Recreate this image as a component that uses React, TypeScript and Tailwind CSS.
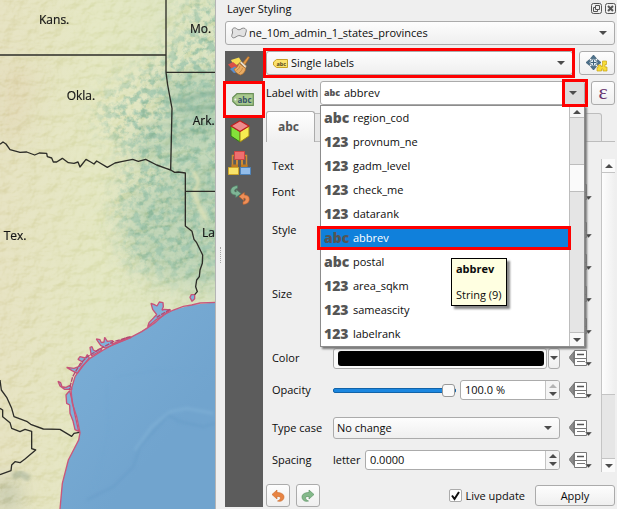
import { useState, type ReactNode } from "react";

const fields: [string, string][] = [
  ["abc", "region_cod"],
  ["123", "provnum_ne"],
  ["123", "gadm_level"],
  ["123", "check_me"],
  ["123", "datarank"],
  ["abc", "abbrev"],
  ["abc", "postal"],
  ["123", "area_sqkm"],
  ["123", "sameascity"],
  ["123", "labelrank"],
];

const frame = "rounded-[3px] border border-[#ababab]";
const raised = "bg-linear-to-b from-[#fdfdfd] to-[#efefef]";

function Arrow({ up = false, faded = false }: { up?: boolean; faded?: boolean }) {
  return (
    <svg width="8" height="4" viewBox="0 0 8 4" className="pointer-events-none shrink-0">
      <path d={up ? "M0 4L4 0l4 4z" : "M0 0h8L4 4z"} fill={faded ? "#b4b4b4" : "#4c4c4c"} />
    </svg>
  );
}

function Combo({ label, value, icon, className = "" }: { label: string; value: string; icon?: ReactNode; className?: string }) {
  return (
    <div className={`flex min-w-0 items-center ${frame} ${raised} ${className}`}>
      {icon}
      <select aria-label={label} className="h-full min-w-0 flex-1 appearance-none bg-transparent outline-none">
        <option>{value}</option>
      </select>
      <span className="px-[7px]">
        <Arrow />
      </span>
    </div>
  );
}

function Spin({ id, label, value, topFaded = false, className = "" }: { id: string; label: string; value: string; topFaded?: boolean; className?: string }) {
  const [text, setText] = useState(value);
  return (
    <div className={`flex h-5 min-w-0 overflow-hidden bg-white ${frame} ${className}`}>
      <input id={id} aria-label={label} value={text} onChange={(e) => setText(e.target.value)} className="min-w-0 flex-1 bg-transparent pl-1 outline-none" />
      <span className="flex w-[14px] flex-col items-center justify-center gap-1 border-l border-[#c4c4c4] bg-[#f4f4f4]">
        <Arrow up faded={topFaded} />
        <Arrow />
      </span>
    </div>
  );
}

function DataDefined() {
  return (
    <button aria-label="Data defined override" className="ml-[9px] mr-[9px] shrink-0">
      <svg width="23" height="17" viewBox="0 0 23 17" className="block">
        <path d="M0 7.500L5 1.500v12z" fill="#8b8b8b" stroke="#666" strokeWidth=".7" />
        <path d="M5.500.5h12v15h-12z" fill="#fff" stroke="#777" />
        <path d="M5.500 8.500h12" stroke="#777" />
        <path d="M8 4.500h7" stroke="#555" strokeWidth="1.500" />
        <path d="M8 11.500h8" stroke="#777" />
        <path d="M16 12h7l-3.500 4z" fill="#444" stroke="#efefef" strokeWidth=".4" />
      </svg>
    </button>
  );
}

function Row({ label, htmlFor, children, override = true }: { label?: string; htmlFor?: string; children?: ReactNode; override?: boolean }) {
  return (
    <div className={`flex items-center ${override ? "h-8" : "h-5"}`}>
      <label htmlFor={htmlFor} className="w-[61px] shrink-0">
        {label}
      </label>
      <div className="flex min-w-0 flex-1 items-center">{children}</div>
      {override && <DataDefined />}
    </div>
  );
}

function TagIcon({ green = false }: { green?: boolean }) {
  return green ? (
    <svg width="22" height="13" viewBox="0 0 22 13">
      <path d="M5 .7h16.300v11.600H5L.8 8.500v-4z" fill="#a9c98e" stroke="#6a8f58" strokeWidth="1.200" />
      <circle cx="3.400" cy="6.500" r="1" fill="#eee" />
      <text x="5.500" y="9.500" fontSize="8" fontWeight="bold" fill="#35546a" fontFamily="Open Sans, sans-serif">abc</text>
    </svg>
  ) : (
    <svg width="15" height="9" viewBox="0 0 15 9" className="mr-[3px] ml-[6px] shrink-0">
      <path d="M3.500.5h11v8h-11l-3-2.500V3z" fill="#fbe26c" stroke="#c6a127" />
      <text x="3.500" y="6.800" fontSize="5.500" fontWeight="bold" fill="#544720" fontFamily="Open Sans, sans-serif">abc</text>
    </svg>
  );
}

function BrushIcon() {
  return (
    <svg width="23" height="20" viewBox="0 0 23 20" strokeLinejoin="round">
      <path d="M3 4l8-2.500 3 5L6 10z" fill="#f6dc55" />
      <path d="M0 8.500L5 6l5 4-5 4z" fill="#d95046" />
      <path d="M2 13l5-2.500 5 5-6 1.500z" fill="#5b8fd0" />
      <path d="M14 8l6-7.500 1.500 1L16 10z" fill="#e39a4a" stroke="#b0681f" strokeWidth=".6" />
      <path d="M11.500 6.500l2-1 5 4.500-1 2.500z" fill="#e6dccb" stroke="#94703f" strokeWidth=".6" />
      <path d="M11 7l6.500 5.500c0 3-2 5.500-5 6.500-3-1-5.500-3-6.500-6 3-1 4-3 5-6z" fill="#e9ac63" stroke="#b3702b" strokeWidth=".7" />
      <path d="M12 10c-.5 2-1.500 3-3.500 4.500M14.500 12c-.5 2-1.500 3.500-3.500 5" fill="none" stroke="#b97834" strokeWidth=".7" />
    </svg>
  );
}

function CubeIcon() {
  return (
    <svg width="20" height="23" viewBox="0 0 20 23" strokeLinejoin="round">
      <path d="M1 6l9 5.500V22L1 16z" fill="#84e03a" stroke="#2f7a14" />
      <path d="M19 6l-9 5.500V22l9-6z" fill="#f6ec50" stroke="#9c8414" />
      <path d="M10 .8L19 6l-9 5.500L1 6z" fill="#f08c8c" stroke="#c01f1f" strokeWidth="1.200" />
    </svg>
  );
}

function DiagramIcon() {
  return (
    <svg width="23" height="24" viewBox="0 0 23 24">
      <path d="M6.500 4.500h-2v11M16.500 4.500h2v11" fill="none" stroke="#d08c33" strokeWidth="1.500" />
      <path d="M9 8v7M14 8v7" stroke="#d08c33" strokeWidth="2" />
      <path d="M3.500 13.500h6.500v3H3.500zM13 13.500h6.500v3H13z" fill="#c07a22" />
      <path d="M6.500.5h10v8h-10z" fill="#ee6f6f" stroke="#cf4444" />
      <path d="M.5 16.500h10v7H.5z" fill="#f9e36a" stroke="#cda52b" />
      <path d="M12.500 16.500h10v7h-10z" fill="#93bdea" stroke="#4f84ba" />
    </svg>
  );
}

function HistoryIcon() {
  return (
    <svg width="20" height="20" viewBox="0 0 20 20" strokeLinejoin="round">
      <path d="M7.500.7C3.500.7.700 3 .7 6c0 2.500 2 4 5 4v2.500L11 8.500 6.200 4.700V7C3.800 7 3.800 4 7.500 3.200z" fill="#7fb596" stroke="#4f8467" strokeWidth=".6" />
      <path d="M13 19.300c4 0 6.300-2 6.300-5s-2-4.300-5-4.300V7.500L9 11.500l4.800 4V13c2.400 0 2.400 3-.8 3.800z" fill="#ee8f58" stroke="#c4632c" strokeWidth=".6" />
    </svg>
  );
}

function Undo({ redo = false }: { redo?: boolean }) {
  return (
    <svg width="14" height="14" viewBox="0 0 14 14" strokeLinejoin="round" className={redo ? "-scale-x-100" : ""}>
      <path d="M6 1L1 5.500 6 10V7.500c3-.3 4 .7 3.300 2.200-.4 1-1.300 1.600-2.800 2.300 3.500 1.200 6.500-1 6.500-4C13 5 10 3.500 6 3.500z" fill={redo ? "#84b98a" : "#e88443"} stroke={redo ? "#548d5c" : "#c96a2a"} strokeWidth=".6" />
    </svg>
  );
}

function PinIcon() {
  return (
    <svg width="22" height="17" viewBox="0 0 22 17">
      <path d="M7.500 0l3 3.500h-6zM7.500 15l3-3.500h-6zM0 7.500l3.500-3v6zM15 7.500l-3.500-3v6z" fill="#4c718b" stroke="#2c4e67" strokeWidth=".6" />
      <path d="M7.500 3l4.500 4.500-4.500 4.500L3 7.500z" fill="#dfe9ef" stroke="#3c617b" />
      <path d="M7.500 4.500v6M4.500 7.500h6" stroke="#3c617b" />
      <path d="M12 10h3v1.500h1.500V6h4v3.500H19V12h2v4h-4v-2h-1.500v2H11v-3.500h1z" fill="#f6dc3a" stroke="#c9a414" strokeWidth=".7" />
    </svg>
  );
}

const bays = [
  "M443 980L447 968 462 952 470 944 458 928 453 910 463 914 471 918 478 906 489 908 490 920 486 930 494 928 512 930 500 938 488 948 470 958z",
  "M289 1017L300 1019 304 1028 312 1026 314 1012 322 1024 338 1022 336 1032 356 1024 382 1012 394 1012 350 1030 316 1044 302 1036 292 1022z",
  "M270 1042L276 1040 280 1050 288 1054 300 1046 306 1050 274 1068z",
  "M200 1102L222 1105 240 1098 248 1086 234 1078 240 1070 256 1074 262 1064 268 1074 250 1096 232 1120 216 1112z",
  "M174 1144L182 1148 186 1160 198 1162 210 1156 216 1168 194 1168 180 1158z",
  "M209 1172L198 1185 200 1210 209 1215 210 1240 219 1263 225 1289 236 1294 224 1240 216 1200z",
  "M570 892L574 884 584 884 584 896 576 904z",
];

function MapCanvas() {
  const land = "M0 0H648V907L575 915 520 930 490 945 440 985 392 1012 345 1030 310 1050 270 1075 245 1100 225 1130 213 1170 217 1210 230 1250 240 1298 236 1320 205 1380 187 1450 180 1527H0z";
  const coast = "M648 907L600 909 575 915 550 919 520 930 490 945 465 968 440 985 425 995 392 1012 345 1030 310 1050 270 1075 245 1100 225 1130 213 1170 217 1210 230 1250 240 1298 236 1320 205 1380 187 1450 180 1527";
  return (
    <svg viewBox="0 0 645 1527" preserveAspectRatio="xMinYMin slice" className="absolute inset-0 size-full" role="img" aria-label="Map of the southern states">
      <defs>
        <linearGradient id="land" x1="0" y1="0" x2="1" y2="0">
          <stop offset="0" stopColor="#e5e1bf" />
          <stop offset=".45" stopColor="#e3e6c0" />
          <stop offset="1" stopColor="#dae3c0" />
        </linearGradient>
        <linearGradient id="sea" x1="0" y1="0" x2=".5" y2="1">
          <stop offset="0" stopColor="#80b3db" />
          <stop offset=".6" stopColor="#7cafd7" />
          <stop offset="1" stopColor="#71a4ce" />
        </linearGradient>
        <filter id="soft" x="-50%" y="-50%" width="200%" height="200%">
          <feGaussianBlur stdDeviation="34" />
        </filter>
        <filter id="haze" x="-50%" y="-50%" width="200%" height="200%">
          <feGaussianBlur stdDeviation="5" />
        </filter>
        <filter id="forest" x="-20%" y="-10%" width="140%" height="120%" colorInterpolationFilters="sRGB">
          <feTurbulence type="fractalNoise" baseFrequency=".045" numOctaves="4" seed="8" />
          <feColorMatrix values="0 0 0 0 .6  0 0 0 0 .76  0 0 0 0 .66  4 0 0 0 -1.700" result="n" />
          <feGaussianBlur in="SourceAlpha" stdDeviation="40" result="m" />
          <feComposite in="n" in2="m" operator="in" />
        </filter>
        <filter id="relief" x="0" y="0" width="100%" height="100%" colorInterpolationFilters="sRGB">
          <feTurbulence type="fractalNoise" baseFrequency=".02 .028" numOctaves="4" seed="3" />
          <feColorMatrix values="0 0 0 0 0  0 0 0 0 0  0 0 0 0 0  1 0 0 0 0" />
          <feDiffuseLighting surfaceScale="16" diffuseConstant=".7" lightingColor="#fff">
            <feDistantLight azimuth="225" elevation="50" />
          </feDiffuseLighting>
        </filter>
        <clipPath id="landclip">
          <path d={land} />
        </clipPath>
      </defs>
      <rect width="648" height="1527" fill="url(#sea)" />
      <g fill="none" filter="url(#haze)">
        <path d="M645 1270L610 1280 540 1265 505 1245 465 1290 420 1340 400 1400 340 1460 260 1500" stroke="#5f96c2" strokeWidth="8" opacity=".35" />
        <path d="M640 1240L560 1225 510 1235 455 1280 405 1350" stroke="#94c2e2" strokeWidth="8" opacity=".3" />
        <path d="M320 1150L325 1290 300 1400 280 1470M350 1130L470 1110 640 1120" stroke="#6ea4ce" strokeWidth="6" opacity=".35" />
      </g>
      <g clipPath="url(#landclip)">
        <rect width="648" height="1527" fill="url(#land)" />
        <g filter="url(#soft)">
          <path d="M480 240L680 210V420L560 400 490 320z" fill="#97bda4" opacity=".55" />
          <path d="M400 400L680 300V600L520 540 400 480z" fill="#a8c9ae" opacity=".5" />
          <path d="M390 560L680 500V860L530 850 420 800 370 700z" fill="#a2c5aa" opacity=".55" />
          <path d="M0 180L120 220 60 420 0 420z" fill="#dfd2ae" opacity=".5" />
          <path d="M0 1440L50 1460 40 1527H0z" fill="#7e9284" opacity=".6" />
        </g>
        <g filter="url(#forest)" opacity=".85">
          <path d="M720 0V840L530 830 400 800 350 600 400 480 300 360 320 290 450 200 540 120 550 0z" />
        </g>
        <rect width="648" height="1527" filter="url(#relief)" className="mix-blend-soft-light" opacity=".45" />
        <path d="M580 512L596 545 582 580 600 625 622 665" fill="none" stroke="#dde1b8" strokeWidth="12" filter="url(#haze)" opacity=".9" />
        <path d="M510 305L560 300 600 285 660 275M530 330L600 325 655 318" fill="none" stroke="#7aa992" strokeWidth="12" opacity=".5" filter="url(#haze)" />
        <path d="M410 385L470 370 520 380M400 420L460 405 520 410 580 395M410 445L500 440 560 425" fill="none" stroke="#8db5a0" strokeWidth="6" opacity=".5" filter="url(#haze)" />
        <path d="M38 1430L60 1420 88 1436" fill="none" stroke="#718b7d" strokeWidth="20" opacity=".3" filter="url(#haze)" />
      </g>
      <g fill="#7fb2da" stroke="#c75278" strokeWidth="4" strokeLinejoin="bevel">
        {bays.map((d) => (
          <path key={d} d={d} />
        ))}
      </g>
      <path d={coast} fill="none" stroke="#c9577b" strokeWidth="4" />
      <path d="M510 928L470 952M392 1010L340 1025 296 1049 262 1070 240 1092 218 1130 208 1168" fill="none" stroke="#b04a74" strokeWidth="4" strokeDasharray="14 3" />
      <g fill="none" stroke="#2d2d28" strokeWidth="4" strokeLinejoin="round">
        <path d="M0 165H498M498 0V217H648M498 217L503 255 516 325 512 510" />
        <path d="M0 433L9 426 18 432 30 449 60 457 80 456 104 465 118 459 140 460 142 470 155 474 160 486 170 486 187 475 205 488 222 490 234 486 240 501 258 478 272 486 282 492 290 483 322 502 345 489 368 484 398 478 415 484 437 478 470 495 498 505 512 510 524 517 535 516 556 519V678L576 694 582 718 590 728 608 765 607 790 600 810 598 830 590 840 587 860 592 875 584 884M556 574H648" />
        <path d="M0 1140L4 1170 20 1192 35 1225 42 1250 80 1264 92 1273 130 1287 180 1288 215 1309 222 1300 238 1297M0 1225L8 1230 8 1250 30 1268 35 1285 60 1295 75 1288 95 1294V1346L107 1350 75 1377 60 1388 45 1385 35 1395 33 1412 0 1424" />
      </g>
      <g fontFamily="Open Sans, sans-serif" fontSize="36" fill="#151515" stroke="#151515" strokeWidth=".6">
        <text x="117" y="73">Kans.</text>
        <text x="570" y="99">Mo.</text>
        <text x="200" y="300">Okla.</text>
        <text x="578" y="375">Ark.</text>
        <text x="11" y="719">Tex.</text>
        <text x="606" y="712">La</text>
      </g>
    </svg>
  );
}

function Highlight({ className }: { className: string }) {
  return <span className={`pointer-events-none absolute border-[3px] border-[#fe0000] ${className}`} />;
}

function FieldList() {
  const [selected, setSelected] = useState("abbrev");
  return (
    <div className="absolute inset-x-0 top-full z-20 flex border border-[#8c8c8c] bg-white shadow-[2px_2px_2px_#777]">
      <ul role="listbox" aria-label="Fields" className="min-w-0 flex-1">
        {fields.map(([kind, name]) => (
          <li
            key={name}
            role="option"
            aria-selected={name === selected}
            onClick={() => setSelected(name)}
            className={`relative flex h-6 items-center pl-[3px] ${name === selected ? "bg-[#1080db] text-white" : ""}`}
          >
            <span className="w-[29px] text-[14px] font-extrabold text-[#555]">{kind}</span>
            {name}
            {name === selected && <Highlight className="-left-1 -right-[2px] inset-y-0" />}
          </li>
        ))}
      </ul>
      <div className="flex w-[15px] shrink-0 flex-col border-l border-[#bdbdbd] bg-[#e5e5e5]">
        <span className="flex h-3 items-center justify-center border-b border-[#bdbdbd] bg-[#f7f7f7]">
          <Arrow up />
        </span>
        <span className="mt-[46px] h-7 border-y border-[#bdbdbd] bg-[#fafafa]" />
        <span className="mt-auto flex h-[14px] items-center justify-center border-t border-[#bdbdbd] bg-[#f7f7f7]">
          <Arrow />
        </span>
      </div>
      <div role="tooltip" className="absolute left-[130px] top-[152px] flex h-12 flex-col justify-between border border-black bg-[#ffffe1] px-1 py-[2px] shadow-[3px_3px_2px_#888]">
        <b>abbrev</b>
        <span className="whitespace-nowrap">String (9)</span>
      </div>
    </div>
  );
}

function Content() {
  return (
    <div className="flex min-w-0 flex-1 flex-col">
      <div className="flex h-6 gap-[6px]">
        <div className="relative flex min-w-0 flex-1">
          <Combo label="Label mode" value="Single labels" icon={<TagIcon />} className="flex-1" />
          <Highlight className="-left-[3px] -right-[2px] -inset-y-[3px]" />
        </div>
        <button aria-label="Automated placement settings" className={`flex w-9 items-center justify-center ${frame} ${raised}`}>
          <PinIcon />
        </button>
      </div>

      <div className="mt-[6px] flex h-6 items-center">
        <label htmlFor="label-field" className="w-[54px] whitespace-nowrap">
          Label with
        </label>
        <div className="relative h-full min-w-0 flex-1">
          <div className={`flex h-full items-center overflow-hidden bg-white ${frame}`}>
            <span className="w-5 pl-[3px] text-[9px] font-extrabold text-[#555]">abc</span>
            <input id="label-field" defaultValue="abbrev" className="min-w-0 flex-1 pl-[3px] outline-none" />
            <button aria-label="Choose field" className="flex h-full w-[22px] items-center justify-center bg-[#dcdcdc]">
              <Arrow />
            </button>
          </div>
          <FieldList />
          <Highlight className="-right-[3px] -inset-y-[2px] z-30 w-[26px]" />
        </div>
        <button aria-label="Expression builder" className={`ml-[6px] flex h-full w-6 items-center justify-center pb-[2px] font-['Liberation_Serif',serif] text-[22px] leading-none text-[#68346e] ${frame} ${raised}`}>
          ε
        </button>
      </div>

      <div role="tablist" className="mt-[6px] flex h-[31px] items-end">
        <button role="tab" aria-selected="true" className="h-full w-[49px] rounded-t-[3px] border border-b-0 border-[#ababab] bg-linear-to-b from-white to-[#efefef] pr-1 text-[12px] font-bold text-[#555]">
          abc
        </button>
        <span className="h-[29px] flex-1 rounded-tr-[3px] border border-l-0 border-[#bdbdbd] bg-[#e7e7e7]" />
        <span className="w-[13px] border-b border-[#bdbdbd]" />
      </div>

      <div className="flex flex-1">
        <div className="flex min-w-0 flex-1 flex-col pl-[6px] pt-[14px]">
          <Row label="Text" override={false} />
          <Row label="Font" />
          <div className="mt-[6px]">
            <Row label="Style" />
          </div>
          <Row />
          <Row label="Size" />
          <Row />
          <Row label="Color">
            <button aria-label="Text color" className={`flex h-[21px] flex-1 p-[2px] pl-1 ${frame} bg-[#fafafa]`}>
              <span className="h-full flex-1 rounded-[3px] bg-black" />
            </button>
            <button aria-label="Color menu" className={`ml-px flex h-[21px] w-3 items-center justify-center ${frame} ${raised}`}>
              <Arrow />
            </button>
          </Row>
          <Row label="Opacity" htmlFor="opacity">
            <input
              id="opacity"
              type="range"
              defaultValue={100}
              className="mr-1 h-[14px] min-w-0 flex-1 appearance-none bg-transparent [&::-webkit-slider-runnable-track]:h-[5px] [&::-webkit-slider-runnable-track]:rounded-[2px] [&::-webkit-slider-runnable-track]:border [&::-webkit-slider-runnable-track]:border-[#1263a8] [&::-webkit-slider-runnable-track]:bg-[#1b87e0] [&::-webkit-slider-thumb]:-mt-[5px] [&::-webkit-slider-thumb]:size-[13px] [&::-webkit-slider-thumb]:appearance-none [&::-webkit-slider-thumb]:rounded-[3px] [&::-webkit-slider-thumb]:border [&::-webkit-slider-thumb]:border-[#999] [&::-webkit-slider-thumb]:bg-[#fafafa]"
            />
            <Spin id="opacity-value" label="Opacity value" value="100.0 %" topFaded className="w-[100px]" />
          </Row>
          <div className="mt-[6px]">
            <Row label="Type case">
              <Combo label="Type case" value="No change" className="h-[22px] flex-1 pl-[3px]" />
            </Row>
          </div>
          <Row label="Spacing">
            <label htmlFor="letter" className="w-8">
              letter
            </label>
            <Spin id="letter" label="Letter spacing" value="0.0000" className="flex-1" />
          </Row>
        </div>
        <div className="mb-3 mt-[17px] flex w-[14px] flex-col border-l border-[#c4c4c4] bg-[#e6e6e6]">
          <span className="flex h-[14px] items-center justify-center border-b border-[#c4c4c4] bg-[#fafafa]">
            <Arrow up />
          </span>
          <span className="h-[222px] border-b border-[#c4c4c4] bg-linear-to-r from-[#fdfdfd] to-[#efefef]" />
          <span className="mt-auto flex h-[14px] items-center justify-center border-t border-[#c4c4c4] bg-[#fafafa]">
            <Arrow />
          </span>
        </div>
      </div>

      <div className="flex h-[23px] items-center">
        <button aria-label="Undo" className={`flex h-full w-6 items-center justify-center ${frame} ${raised}`}>
          <Undo />
        </button>
        <button aria-label="Redo" className={`ml-[6px] flex h-full w-6 items-center justify-center ${frame} ${raised}`}>
          <Undo redo />
        </button>
        <label className="ml-auto mr-[10px] flex items-center gap-1">
          <span className="relative flex size-[13px] items-center justify-center">
            <input type="checkbox" defaultChecked className="peer absolute inset-0 appearance-none rounded-[2px] border border-[#ababab] bg-white" />
            <svg width="9" height="10" viewBox="0 0 9 10" className="pointer-events-none relative opacity-0 peer-checked:opacity-100">
              <path d="M1 4.500L3.500 8 8 1" fill="none" stroke="#111" strokeWidth="2" />
            </svg>
          </span>
          Live update
        </label>
        <button className={`h-[21px] w-20 ${frame} ${raised}`}>Apply</button>
      </div>
    </div>
  );
}

export default function App() {
  return (
    <main className="flex min-h-screen overflow-hidden bg-[#efefef] font-['Open_Sans','Noto_Sans',sans-serif] text-[11px] leading-4 text-[#0c0c0c]">
      <section className="relative w-[35%] shrink-0 overflow-hidden border-r border-[#b5b5b5]">
        <MapCanvas />
      </section>
      <div className="flex w-[9px] shrink-0 items-center justify-center">
        <span className="h-4 border-l border-dotted border-[#a5a5a5]" />
      </div>
      <section className="flex min-w-0 flex-1 flex-col pb-[2px] pr-[2px]">
        <header className="flex h-[21px] items-start justify-between pl-[2px]">
          <h1 className="text-[11px] leading-[18px]">Layer Styling</h1>
          <div className="-mr-px flex gap-[3px] pt-[3px]">
            <button aria-label="Float panel">
              <svg width="11" height="11" viewBox="0 0 11 11" fill="none" stroke="#555" className="block">
                <rect x=".5" y=".5" width="10" height="10" rx="2" />
                <path d="M4.500 2.500h4v4h-4zM4.500 4.500h-2v4h4v-2" />
              </svg>
            </button>
            <button aria-label="Close panel">
              <svg width="11" height="11" viewBox="0 0 11 11" fill="none" stroke="#555" className="block">
                <rect x=".5" y=".5" width="10" height="10" rx="2" />
                <path d="M3 3l5 5M8 3L3 8" strokeWidth="2" />
              </svg>
            </button>
          </div>
        </header>
        <Combo
          label="Layer"
          value="ne_10m_admin_1_states_provinces"
          className="h-6"
          icon={
            <svg width="16" height="12" viewBox="0 0 16 12" className="ml-[5px] mr-[2px] shrink-0">
              <path d="M1.500 2C3 0 5 1 6 2s3 1 4 0 4-1.500 5 .5-.5 3-.5 4.500-1 3-3 2.500-3-1.500-5-.5-3.500 2.500-5 1.500-.5-3 0-4.500S.5 3.500 1.500 2z" fill="#e2e2e2" stroke="#858585" />
            </svg>
          }
        />
        <div className="mt-[6px] flex flex-1 gap-[3px]">
          <nav className="flex w-[38px] shrink-0 flex-col bg-[#5c5c5c]">
            <button aria-label="Symbology" className="flex h-[30px] items-center justify-center pr-2">
              <BrushIcon />
            </button>
            <button aria-label="Labels" className="relative flex h-9 items-center justify-center bg-[#efefef] pr-[2px]">
              <TagIcon green />
              <Highlight className="-inset-x-[2px] -bottom-px top-0" />
            </button>
            <button aria-label="3D view" className="flex h-7 items-center justify-center pr-2">
              <CubeIcon />
            </button>
            <button aria-label="Diagrams" className="flex h-9 items-center justify-center pr-2">
              <DiagramIcon />
            </button>
            <button aria-label="History" className="flex h-7 items-center justify-center pr-2">
              <HistoryIcon />
            </button>
          </nav>
          <Content />
        </div>
      </section>
    </main>
  );
}
